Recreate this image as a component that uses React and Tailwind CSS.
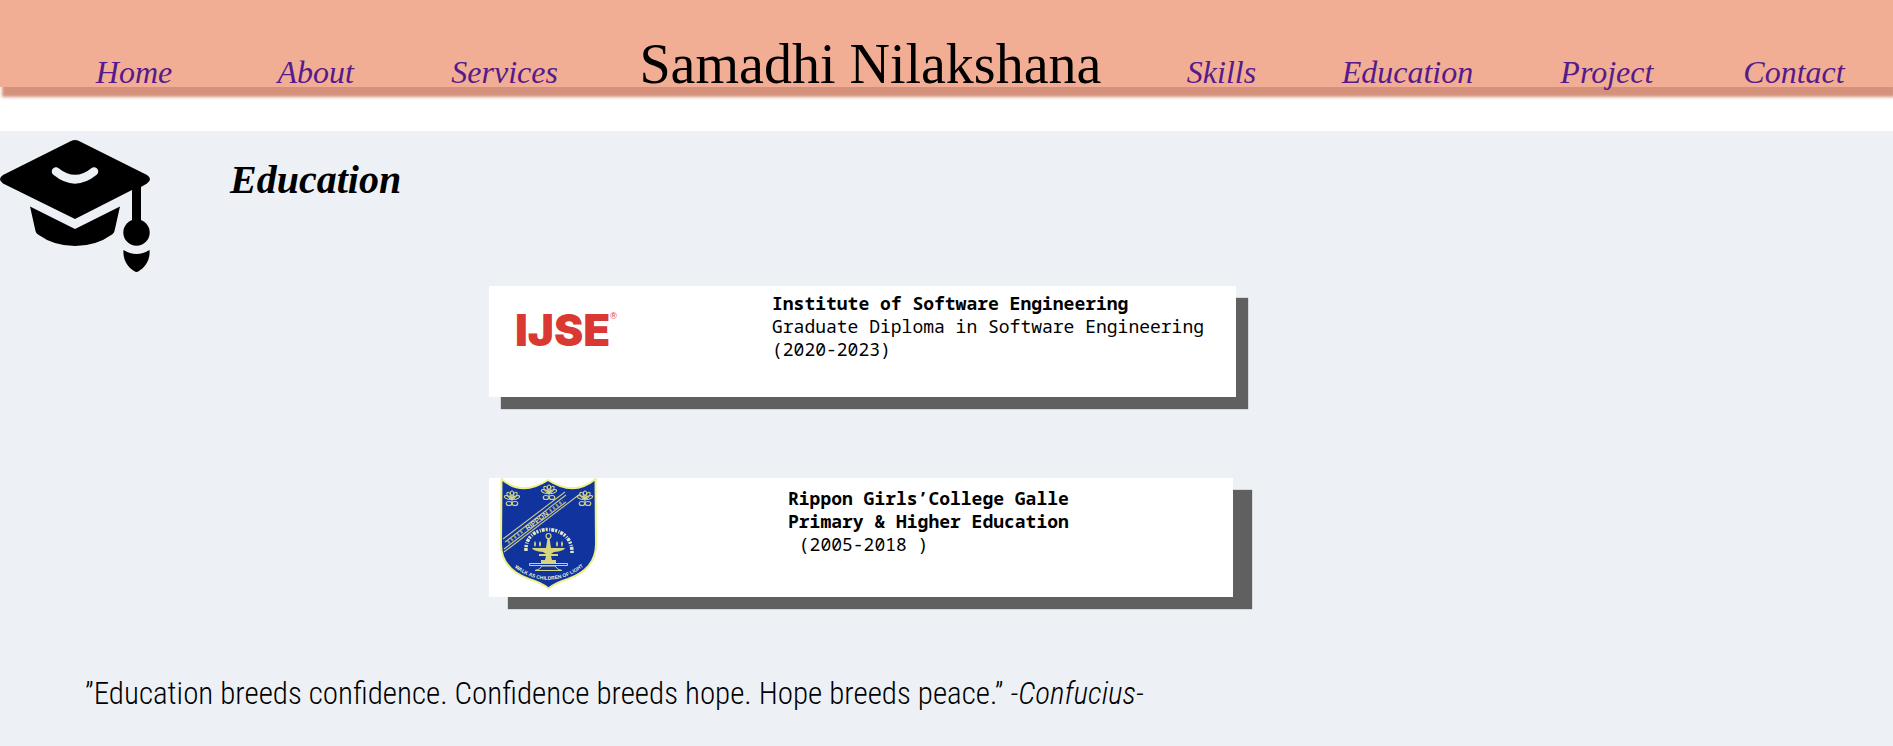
const leftLinks = [
  { label: "Home", width: "w-[92px]" },
  { label: "About", width: "w-[105px]" },
  { label: "Services", width: "w-[105px]" },
];

const rightLinks = [
  { label: "Skills", width: "w-[74px]" },
  { label: "Education", width: "w-[130px]" },
  { label: "Project", width: "w-[104px]" },
  { label: "Contact", width: "w-[104px]" },
];

function NavLink({ label, width }) {
  return (
    <a
      href={"#" + label.toLowerCase()}
      className={
        "shrink-0 text-center font-['Liberation_Serif',serif] text-[32px] italic leading-[40px] whitespace-nowrap text-[#551a8b] " +
        width
      }
    >
      {label}
    </a>
  );
}

function CapIcon() {
  return (
    <svg viewBox="0 0 150 132" className="h-[132px] w-[150px] shrink-0" aria-hidden="true">
      <path d="M71 1 Q75 -1 79 1 L147 35 Q153 39 147 43.500 L141 47 V81 H132 V50 L75 79 L3 43.500 Q-3 39 3 35 Z" />
      <path d="M56 31.500 Q75 47 94 31.500" fill="none" stroke="#edf1f6" strokeWidth="8.500" strokeLinecap="round" />
      <path d="M30 66.500 L75 89 L120 66.500 L114.500 91 Q114 93 112 94.500 Q96 106 75 106 Q54 106 38 94.500 Q36 93 35.500 91 Z" />
      <circle cx="136.500" cy="92.500" r="13.200" />
      <path d="M123.500 110 Q136.500 118 149.500 110 C150.500 121 144 128 139 131 Q136.500 133 134 131 C129 128 122.500 121 123.500 110 Z" />
    </svg>
  );
}

function IjseLogo() {
  return (
    <div className="flex items-start text-[#da3832]">
      <span className="font-['Inter',sans-serif] text-[44px] leading-[40px] font-black">IJSE</span>
      <span className="font-['Liberation_Sans',sans-serif] text-[9px] leading-[12px]">®</span>
    </div>
  );
}

function Lotus({ x, y }) {
  return (
    <g transform={`translate(${x} ${y})`} fill="none" stroke="#d5d58c" strokeWidth="1.100">
      <ellipse cx="0" cy="-4" rx="1.800" ry="4" />
      <ellipse cx="0" cy="-4" rx="1.800" ry="4" transform="rotate(35)" />
      <ellipse cx="0" cy="-4" rx="1.800" ry="4" transform="rotate(-35)" />
      <ellipse cx="0" cy="-4.500" rx="1.600" ry="3.500" transform="rotate(70)" />
      <ellipse cx="0" cy="-4.500" rx="1.600" ry="3.500" transform="rotate(-70)" />
      <ellipse cx="-3" cy="4.500" rx="2.800" ry="2" />
      <ellipse cx="3" cy="4.500" rx="2.800" ry="2" />
      <path d="M0 0 V3" />
    </g>
  );
}

function RipponCrest() {
  return (
    <svg viewBox="0 0 97 112" className="h-[112px] w-[97px] shrink-0" role="img" aria-label="Rippon Girls' College crest">
      <defs>
        <path id="motto" d="M8 84 Q26 101 48 102 Q71 101 90 83" />
      </defs>
      <path
        d="M1.500 1 Q22 19 48 2 Q74 19 95.500 1 L96 66 Q96 91 68 101 Q55 105 48.500 110.500 Q42 105 29 101 Q1 91 1 66 Z"
        fill="#10339d"
        stroke="#edf08c"
        strokeWidth="2"
      />
      <Lotus x={12} y={21} />
      <Lotus x={49} y={15} />
      <Lotus x={85} y={21} />
      <g stroke="#c6c78c" strokeWidth="1.100" fill="none">
        <path d="M3 61 L65 14 M5 64 L66 17 M4 71 L66 24 M4 74 L80 16" />
        <path d="M8 64.500 L24 52 M50 33 L63 23" strokeWidth="3.500" strokeDasharray="2 2" opacity="0.700" />
      </g>
      <text
        x="37"
        y="45"
        textAnchor="middle"
        transform="rotate(-37 37 43)"
        fontSize="7"
        fill="#dfdf9a"
        className="font-['Liberation_Sans',sans-serif] font-bold"
      >
        RIPPON
      </text>
      <path d="M26 73 C24 44 73 44 72 75" fill="none" stroke="#e6e8c4" strokeWidth="3.500" strokeDasharray="3 1 2 1.500 1 1" />
      <g fill="#d8d67c">
        <circle cx="48.500" cy="58" r="2.500" fill="none" stroke="#d8d67c" strokeWidth="1.200" />
        <path d="M47.500 60 H49.500 L51 70 H46 Z" />
        <path d="M32 70 H65 Q64 73 54 74 L51 76 H58 V78 H51 L52 82 H56 V85 H41 V82 H45 L46 78 H39 V76 H46 L43 74 Q33 73 32 70 Z" />
        <path d="M35 69 q-2 -3 0 -6 q2 3 0 6 M40 69 q-2 -3 0 -6 q2 3 0 6 M57 69 q-2 -3 0 -6 q2 3 0 6 M62 69 q-2 -3 0 -6 q2 3 0 6" />
        <path
          d="M29.500 85.500 H67.500 V87.500 H29.500 Z M42 88 H55 Q57 92 62 92.500 H35 Q40 92 42 88 Z"
          fill="none"
          stroke="#d8d67c"
          strokeWidth="1"
        />
      </g>
      <text
        fontSize="5"
        fill="#eff0d0"
        textAnchor="middle"
        className="font-['Liberation_Sans',sans-serif] font-bold"
      >
        <textPath href="#motto" startOffset="50%">
          WALK AS CHILDREN OF LIGHT
        </textPath>
      </text>
    </svg>
  );
}

export default function App() {
  return (
    <div className="flex min-h-screen flex-col overflow-x-hidden bg-white text-black">
      <header className="relative h-[87px] bg-[#f2ae94] pt-8 shadow-[2px_10px_3px_#d5917b]">
        <nav className="flex items-baseline justify-between pr-[47px] pl-[88px]">
          {leftLinks.map((l) => (
            <NavLink key={l.label} {...l} />
          ))}
          <h1 className="shrink-0 font-['Liberation_Serif',serif] text-[56px] leading-[64px] whitespace-nowrap">
            Samadhi Nilakshana
          </h1>
          {rightLinks.map((l) => (
            <NavLink key={l.label} {...l} />
          ))}
        </nav>
      </header>

      <main className="mt-[44px] flex-1 bg-[#edf1f6] pt-[9px] pb-8">
        <div className="flex items-start gap-20">
          <CapIcon />
          <h2 className="mt-4 font-['Liberation_Serif',serif] text-[40px] leading-[48px] font-bold italic">Education</h2>
        </div>

        <section className="mt-[14px] ml-[489px] flex flex-col items-start gap-[81px] font-['Noto_Sans_Mono','DejaVu_Sans_Mono',monospace] text-[18px] leading-[23px]">
          <article className="flex h-[111px] w-[747px] items-start bg-white shadow-[12px_12px_1px_#606060]">
            <div className="w-[283px] shrink-0 pt-[24px] pl-[26px]">
              <IjseLogo />
            </div>
            <div className="pt-[6px] whitespace-nowrap">
              <h3 className="font-bold">Institute of Software Engineering</h3>
              <p>Graduate Diploma in Software Engineering</p>
              <p>(2020-2023)</p>
            </div>
          </article>

          <article className="flex h-[119px] w-[744px] items-start bg-white shadow-[19px_12px_1px_#606060]">
            <div className="w-[299px] shrink-0 pl-[11px]">
              <RipponCrest />
            </div>
            <div className="pt-[9px] whitespace-pre">
              <h3 className="font-bold">Rippon Girls’College Galle</h3>
              <p className="font-bold">Primary &amp; Higher Education</p>
              <p>{" (2005-2018 )"}</p>
            </div>
          </article>
        </section>

        <p className="mt-[79px] ml-[85px] font-['Roboto_Condensed','Roboto',sans-serif] text-[31px] leading-[36px] font-light">
          ”Education breeds confidence. Confidence breeds hope. Hope breeds peace.” <i>-Confucius-</i>
        </p>
      </main>
    </div>
  );
}
